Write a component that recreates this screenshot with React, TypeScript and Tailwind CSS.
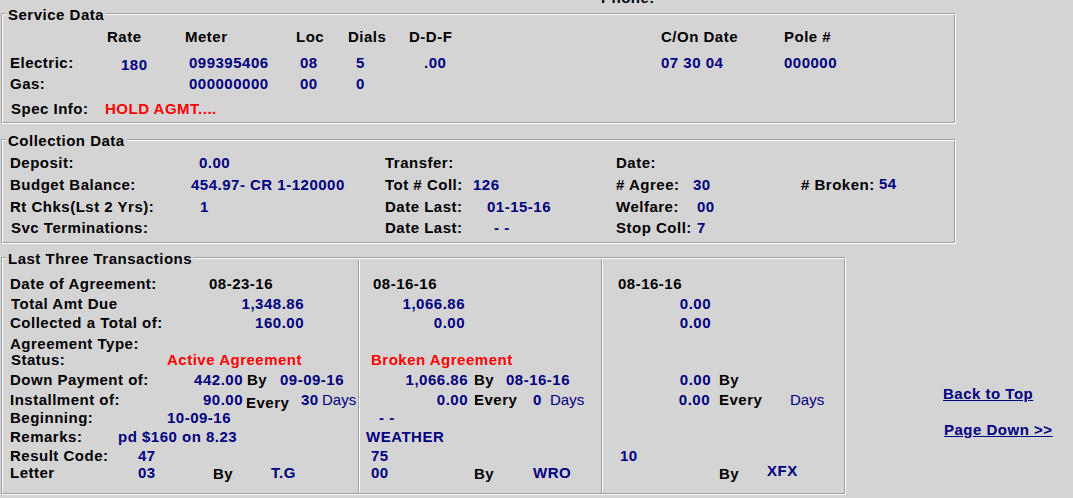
import React from "react";

function C({ c = "", children }: { c?: string; children?: React.ReactNode }) {
  return <span className={`block shrink-0 ${c}`}>{children}</span>;
}

function Box({
  legend,
  className = "",
  innerClass = "",
  children,
}: {
  legend?: string;
  className?: string;
  innerClass?: string;
  children?: React.ReactNode;
}) {
  return (
    <div
      className={`relative shrink-0 border border-t-[#a0a0a0] border-l-[#a0a0a0] border-b-white border-r-white ${className}`}
    >
      <div
        className={`h-full border border-t-white border-l-white border-b-[#a0a0a0] border-r-[#a0a0a0] ${innerClass}`}
      >
        {children}
      </div>
      {legend && (
        <span className="absolute -top-[8px] left-[4px] bg-[#d4d4d4] px-[2px]">{legend}</span>
      )}
    </div>
  );
}

export default function App() {
  return (
    <div className="w-[1073px] h-[498px] overflow-hidden bg-[#d4d4d4] font-['Liberation_Sans',Arial,sans-serif] text-[15px] leading-[17px] font-bold tracking-[0.5px] text-black whitespace-nowrap">
      <div className="h-[13px] overflow-hidden">
        <div className="-mt-[11px] pl-[601px]">Phone:</div>
      </div>

      <div className="pl-[1px]">
        {/* Service Data */}
        <Box legend="Service Data" className="w-[955px] h-[111px]" innerClass="pt-[13px]">
          <div className="flex h-[26px]">
            <C c="w-[104px]" />
            <C c="w-[78px]">Rate</C>
            <C c="w-[111px]">Meter</C>
            <C c="w-[52px]">Loc</C>
            <C c="w-[61px]">Dials</C>
            <C c="w-[252px]">D-D-F</C>
            <C c="w-[123px]">C/On Date</C>
            <C>Pole #</C>
          </div>
          <div className="flex h-[21px]">
            <C c="w-[118px] pl-[7px]">Electric:</C>
            <C c="w-[68px] pt-[2px] text-[#000080]">180</C>
            <C c="w-[111px] text-[#000080]">099395406</C>
            <C c="w-[56px] text-[#000080]">08</C>
            <C c="w-[68px] text-[#000080]">5</C>
            <C c="w-[237px] text-[#000080]">.00</C>
            <C c="w-[123px] text-[#000080]">07 30 04</C>
            <C c="text-[#000080]">000000</C>
          </div>
          <div className="flex h-[25px]">
            <C c="w-[186px] pl-[7px]">Gas:</C>
            <C c="w-[111px] text-[#000080]">000000000</C>
            <C c="w-[56px] text-[#000080]">00</C>
            <C c="text-[#000080]">0</C>
          </div>
          <div className="flex h-[17px]">
            <C c="w-[102px] pl-[8px]">Spec Info:</C>
            <C c="text-[#ff0000]">HOLD AGMT....</C>
          </div>
        </Box>

        {/* Collection Data */}
        <Box legend="Collection Data" className="mt-[15px] w-[955px] h-[105px]" innerClass="pt-[13px]">
          <div className="flex h-[22px]">
            <C c="w-[196px] pl-[7px]">Deposit:</C>
            <C c="w-[186px] text-[#000080]">0.00</C>
            <C c="w-[231px]">Transfer:</C>
            <C>Date:</C>
          </div>
          <div className="flex h-[22px]">
            <C c="w-[188px] pl-[7px]">Budget Balance:</C>
            <C c="w-[194px] text-[#000080]">454.97- CR 1-120000</C>
            <C c="w-[88px]">Tot # Coll:</C>
            <C c="w-[143px] text-[#000080]">126</C>
            <C c="w-[77px]"># Agree:</C>
            <C c="w-[108px] text-[#000080]">30</C>
            <C c="w-[78px]"># Broken:</C>
            <C c="-mt-[1px] text-[#000080]">54</C>
          </div>
          <div className="flex h-[21px]">
            <C c="w-[197px] pl-[7px]">Rt Chks(Lst 2 Yrs):</C>
            <C c="w-[185px] text-[#000080]">1</C>
            <C c="w-[102px]">Date Last:</C>
            <C c="w-[129px] text-[#000080]">01-15-16</C>
            <C c="w-[81px]">Welfare:</C>
            <C c="text-[#000080]">00</C>
          </div>
          <div className="flex h-[17px]">
            <C c="w-[382px] pl-[8px]">Svc Terminations:</C>
            <C c="w-[109px]">Date Last:</C>
            <C c="w-[122px] text-[#000080]">- -</C>
            <C c="w-[81px]">Stop Coll:</C>
            <C c="text-[#000080]">7</C>
          </div>
        </Box>

        <div className="mt-[13px] flex">
          {/* Last Three Transactions */}
          <Box legend="Last Three Transactions" className="w-[845px] h-[238px]" innerClass="flex">
            {/* Column 1 */}
            <div className="w-[355px] shrink-0 flex flex-col pt-[16px]">
              <div className="flex h-[20px]">
                <C c="w-[206px] pl-[7px]">Date of Agreement:</C>
                <C>08-23-16</C>
              </div>
              <div className="flex h-[19px]">
                <C c="w-[209px] pl-[8px]">Total Amt Due</C>
                <C c="w-[92px] text-right text-[#000080]">1,348.86</C>
              </div>
              <div className="flex h-[21px]">
                <C c="w-[209px] pl-[7px]">Collected a Total of:</C>
                <C c="w-[92px] text-right text-[#000080]">160.00</C>
              </div>
              <div className="flex h-[16px]">
                <C c="pl-[7px]">Agreement Type:</C>
              </div>
              <div className="flex h-[20px]">
                <C c="w-[164px] pl-[8px]">Status:</C>
                <C c="text-[#ff0000]">Active Agreement</C>
              </div>
              <div className="flex h-[20px]">
                <C c="w-[180px] pl-[7px]">Down Payment of:</C>
                <C c="w-[60px] text-right text-[#000080]">442.00</C>
                <C c="w-[37px] pl-[4px]">By</C>
                <C c="text-[#000080]">09-09-16</C>
              </div>
              <div className="flex h-[18px]">
                <C c="w-[180px] pl-[7px]">Installment of:</C>
                <C c="w-[60px] text-right text-[#000080]">90.00</C>
                <C c="w-[58px] pl-[3px] pt-[3px]">Every</C>
                <C c="w-[21px] text-[#000080]">30</C>
                <C c="font-normal tracking-normal text-[#000080]">Days</C>
              </div>
              <div className="flex h-[19px]">
                <C c="w-[164px] pl-[7px]">Beginning:</C>
                <C c="text-[#000080]">10-09-16</C>
              </div>
              <div className="flex h-[19px]">
                <C c="w-[115px] pl-[7px]">Remarks:</C>
                <C c="text-[#000080]">pd $160 on 8.23</C>
              </div>
              <div className="flex h-[17px]">
                <C c="w-[135px] pl-[7px]">Result Code:</C>
                <C c="text-[#000080]">47</C>
              </div>
              <div className="flex h-[17px]">
                <C c="w-[135px] pl-[7px]">Letter</C>
                <C c="w-[75px] text-[#000080]">03</C>
                <C c="w-[58px] pt-[1px]">By</C>
                <C c="text-[#000080]">T.G</C>
              </div>
            </div>

            <div className="w-[2px] shrink-0 border-l border-l-[#a0a0a0] border-r border-r-white" />

            {/* Column 2 */}
            <div className="w-[241px] shrink-0 flex flex-col pt-[16px]">
              <div className="flex h-[20px]">
                <C c="pl-[13px]">08-16-16</C>
              </div>
              <div className="flex h-[19px]">
                <C c="w-[105px] text-right text-[#000080]">1,066.86</C>
              </div>
              <div className="flex h-[21px]">
                <C c="w-[105px] text-right text-[#000080]">0.00</C>
              </div>
              <div className="flex h-[16px]" />
              <div className="flex h-[20px]">
                <C c="pl-[11px] text-[#ff0000]">Broken Agreement</C>
              </div>
              <div className="flex h-[20px]">
                <C c="w-[108px] text-right text-[#000080]">1,066.86</C>
                <C c="w-[38px] pl-[6px]">By</C>
                <C c="text-[#000080]">08-16-16</C>
              </div>
              <div className="flex h-[18px]">
                <C c="w-[108px] text-right text-[#000080]">0.00</C>
                <C c="w-[65px] pl-[6px]">Every</C>
                <C c="w-[17px] text-[#000080]">0</C>
                <C c="font-normal tracking-normal text-[#000080]">Days</C>
              </div>
              <div className="flex h-[19px]">
                <C c="pl-[19px] text-[#000080]">- -</C>
              </div>
              <div className="flex h-[19px]">
                <C c="pl-[6px] text-[#000080]">WEATHER</C>
              </div>
              <div className="flex h-[17px]">
                <C c="pl-[11px] text-[#000080]">75</C>
              </div>
              <div className="flex h-[17px]">
                <C c="w-[114px] pl-[11px] text-[#000080]">00</C>
                <C c="w-[59px] pt-[1px]">By</C>
                <C c="text-[#000080]">WRO</C>
              </div>
            </div>

            <div className="w-[2px] shrink-0 border-l border-l-[#a0a0a0] border-r border-r-white" />

            {/* Column 3 */}
            <div className="flex-1 flex flex-col pt-[16px]">
              <div className="flex h-[20px]">
                <C c="pl-[15px]">08-16-16</C>
              </div>
              <div className="flex h-[19px]">
                <C c="w-[108px] text-right text-[#000080]">0.00</C>
              </div>
              <div className="flex h-[21px]">
                <C c="w-[108px] text-right text-[#000080]">0.00</C>
              </div>
              <div className="flex h-[16px]" />
              <div className="flex h-[20px]" />
              <div className="flex h-[20px]">
                <C c="w-[108px] text-right text-[#000080]">0.00</C>
                <C c="pl-[8px]">By</C>
              </div>
              <div className="flex h-[18px]">
                <C c="w-[107px] text-right text-[#000080]">0.00</C>
                <C c="w-[80px] pl-[9px]">Every</C>
                <C c="font-normal tracking-normal text-[#000080]">Days</C>
              </div>
              <div className="flex h-[19px]" />
              <div className="flex h-[19px]" />
              <div className="flex h-[17px]">
                <C c="pl-[17px] text-[#000080]">10</C>
              </div>
              <div className="flex h-[17px]">
                <C c="w-[116px]" />
                <C c="w-[48px] pt-[1px]">By</C>
                <C c="-mt-[2px] text-[#000080]">XFX</C>
              </div>
            </div>
          </Box>

          <div className="flex flex-col pt-[128px] pl-[97px]">
            <a href="#" className="text-[#000080] underline">
              Back to Top
            </a>
            <a href="#" className="mt-[19px] pl-[1px] text-[#000080] underline">
              Page Down &gt;&gt;
            </a>
          </div>
        </div>
      </div>
    </div>
  );
}
